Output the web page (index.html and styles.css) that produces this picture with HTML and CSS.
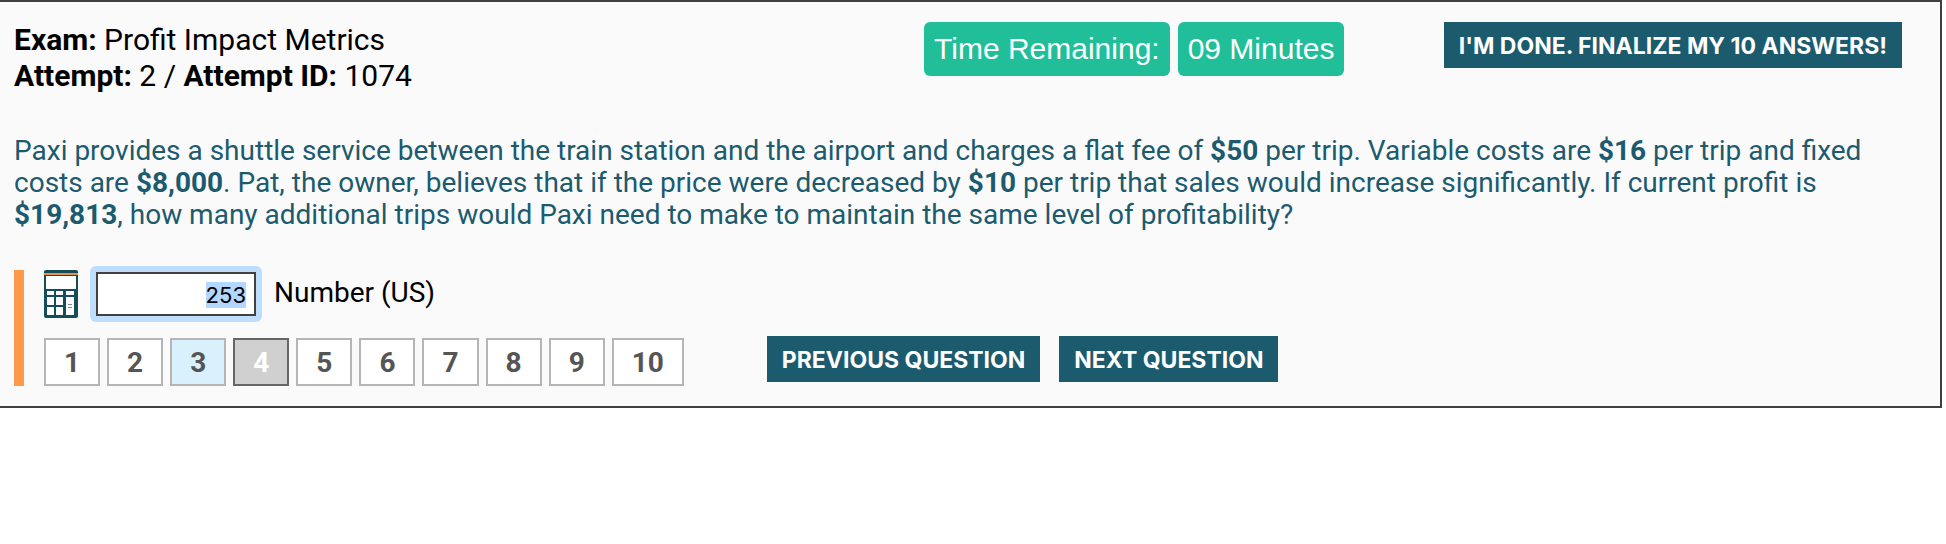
FILE: index.html
```
<!DOCTYPE html>
<html lang="en">

<head>
    <meta charset="UTF-8">
    <meta name="viewport" content="width=device-width, initial-scale=1.0">
    <title>Profit Impact Metrics</title>
    <link rel="stylesheet" href="styles.css">
</head>

<body>
    <main class="exam">
        <header class="exam-header">
            <div class="exam-info">
                <div><b>Exam:</b> Profit Impact Metrics</div>
                <div><b>Attempt:</b> 2 / <b>Attempt ID:</b> 1074</div>
            </div>
            <div class="timer">
                <span class="timer-label">Time Remaining:</span>
                <span class="timer-label">09 Minutes</span>
            </div>
            <button type="button" class="btn btn-finalize">I'M DONE. FINALIZE MY 10 ANSWERS!</button>
        </header>

        <p class="question">Paxi provides a shuttle service between the train station and the airport and charges a flat fee of <b>$50</b> per trip. Variable costs are <b>$16</b> per trip and fixed costs are <b>$8,000</b>. Pat, the owner, believes that if the price were decreased by <b>$10</b> per trip that sales would increase significantly. If current profit is <b>$19,813</b>, how many additional trips would Paxi need to make to maintain the same level of profitability?</p>

        <section class="answer">
            <div class="answer-row">
                <svg class="calculator" viewBox="0 0 34 48" aria-hidden="true">
                    <rect width="34" height="48" rx="2" fill="#154c5c"/>
                    <rect y="3" width="34" height="2" fill="#e8924f"/>
                    <g fill="#fff">
                        <rect x="2" y="6" width="30" height="13"/>
                        <rect x="3" y="21" width="7" height="4"/>
                        <rect x="12" y="21" width="7" height="4"/>
                        <rect x="22" y="21" width="8" height="4"/>
                        <rect x="3" y="27" width="7" height="8"/>
                        <rect x="12" y="27" width="7" height="8"/>
                        <rect x="3" y="37" width="7" height="8"/>
                        <rect x="12" y="37" width="7" height="8"/>
                        <rect x="22" y="27" width="8" height="18"/>
                    </g>
                    <path d="M24 34.5h4M24 37.5h4" stroke="#6c929d" stroke-width="1"/>
                </svg>
                <span class="answer-field">
                    <input type="text" id="answer" class="answer-input" value="253" autocomplete="off" autofocus>
                </span>
                <label for="answer" class="answer-label">Number (US)</label>
            </div>
            <div class="nav-row">
                <nav class="pages">
                    <button type="button" class="page">1</button>
                    <button type="button" class="page">2</button>
                    <button type="button" class="page visited">3</button>
                    <button type="button" class="page current">4</button>
                    <button type="button" class="page">5</button>
                    <button type="button" class="page">6</button>
                    <button type="button" class="page">7</button>
                    <button type="button" class="page">8</button>
                    <button type="button" class="page">9</button>
                    <button type="button" class="page">10</button>
                </nav>
                <div class="steps">
                    <button type="button" class="btn">PREVIOUS QUESTION</button>
                    <button type="button" class="btn">NEXT QUESTION</button>
                </div>
            </div>
        </section>
    </main>

    <script>
        const answer = document.getElementById('answer');
        answer.focus();
        answer.select();
    </script>
</body>

</html>
```
FILE: styles.css
```
* {
    box-sizing: border-box;
}

body {
    margin: 0;
    background-color: #fff;
    color: #000;
    font-family: Roboto, sans-serif;
    font-size: 28px;
}

.exam {
    margin-right: 4px;
    padding: 20px 38px 20px 14px;
    background-color: #fafafa;
    border: 2px solid #404040;
    border-left: none;
}

.exam-header {
    display: flex;
    align-items: flex-start;
}

.exam-info {
    flex: 0 0 48.2%;
    font-size: 30px;
    line-height: 36px;
}

.timer {
    display: flex;
    gap: 8px;
}

.timer-label {
    padding: 10px;
    border-radius: 6px;
    background-color: #20bf99;
    color: #fff;
    font-family: "Liberation Sans", Arial, sans-serif;
    font-size: 30px;
    line-height: 34px;
}

.btn {
    height: 46px;
    padding: 2px 15px 0;
    border: none;
    background-color: #1c5a6e;
    color: #fff;
    font-family: Inter, sans-serif;
    font-size: 23px;
    font-weight: 700;
    white-space: nowrap;
}

.btn-finalize {
    margin-left: auto;
}

.question {
    margin: 41px 0 39px;
    color: #1c5a6e;
    line-height: 32px;
}

.answer {
    padding-left: 20px;
    border-left: 10px solid #ff994a;
}

.answer-row {
    display: flex;
    align-items: center;
    height: 48px;
}

.calculator {
    width: 34px;
    height: 48px;
    margin-right: 12px;
}

.answer-field {
    display: flex;
    margin-right: 12px;
    padding: 6px;
    border-radius: 6px;
}

.answer-field:focus-within {
    background-color: #bfddfd;
}

.answer-input {
    width: 160px;
    height: 44px;
    padding: 2px 8px 0;
    border: 2px solid #404040;
    outline: none;
    background-color: #fff;
    font-family: Inter, sans-serif;
    font-size: 22px;
    text-align: right;
}

.answer-input::selection {
    background-color: rgba(178, 215, 255, 0.99);
    color: #000;
}

.answer-label {
    align-self: flex-start;
    line-height: 46px;
}

.nav-row {
    display: flex;
    align-items: flex-end;
    gap: 83px;
    margin-top: 18px;
}

.pages {
    display: flex;
    gap: 7px;
}

.page {
    height: 48px;
    padding: 0 18px;
    border: 2px solid #b5b5b5;
    background-color: #fff;
    color: #555;
    font-family: Roboto, sans-serif;
    font-size: 28px;
    font-weight: 700;
}

.visited {
    background-color: #d9f1fc;
}

.current {
    border-color: #666;
    background-color: #d0d0d0;
    color: #fff;
}

.steps {
    display: flex;
    gap: 19px;
    padding-bottom: 4px;
}
```
